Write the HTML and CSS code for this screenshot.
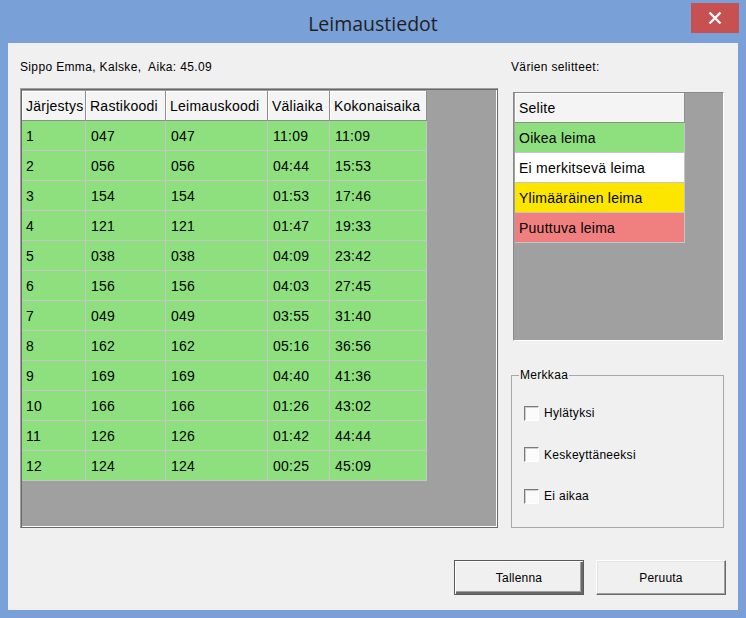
FILE: index.html
```html
<!DOCTYPE html>
<html lang="fi">
<head>
<meta charset="utf-8">
<title>Leimaustiedot</title>
<link rel="stylesheet" href="styles.css">
</head>
<body>
<div class="window">
  <div class="titlebar">
    <div class="title">Leimaustiedot</div>
    <div class="close"><svg width="14" height="14" viewBox="0 0 14 14"><path d="M1.5 1.5 L12.5 12.5 M12.5 1.5 L1.5 12.5" stroke="#fff" stroke-width="2.4" fill="none"/></svg></div>
  </div>
  <div class="client">
    <div class="main">
      <div class="leftcol">
        <div class="info">Sippo Emma, Kalske,&nbsp; Aika: 45.09</div>
        <div class="gridframe">
          <div class="grid">
            <div class="hc">Järjestys</div><div class="hc">Rastikoodi</div><div class="hc">Leimauskoodi</div><div class="hc">Väliaika</div><div class="hc">Kokonaisaika</div>
            <div class="dc">1</div><div class="dc">047</div><div class="dc">047</div><div class="dc">11:09</div><div class="dc">11:09</div>
            <div class="dc">2</div><div class="dc">056</div><div class="dc">056</div><div class="dc">04:44</div><div class="dc">15:53</div>
            <div class="dc">3</div><div class="dc">154</div><div class="dc">154</div><div class="dc">01:53</div><div class="dc">17:46</div>
            <div class="dc">4</div><div class="dc">121</div><div class="dc">121</div><div class="dc">01:47</div><div class="dc">19:33</div>
            <div class="dc">5</div><div class="dc">038</div><div class="dc">038</div><div class="dc">04:09</div><div class="dc">23:42</div>
            <div class="dc">6</div><div class="dc">156</div><div class="dc">156</div><div class="dc">04:03</div><div class="dc">27:45</div>
            <div class="dc">7</div><div class="dc">049</div><div class="dc">049</div><div class="dc">03:55</div><div class="dc">31:40</div>
            <div class="dc">8</div><div class="dc">162</div><div class="dc">162</div><div class="dc">05:16</div><div class="dc">36:56</div>
            <div class="dc">9</div><div class="dc">169</div><div class="dc">169</div><div class="dc">04:40</div><div class="dc">41:36</div>
            <div class="dc">10</div><div class="dc">166</div><div class="dc">166</div><div class="dc">01:26</div><div class="dc">43:02</div>
            <div class="dc">11</div><div class="dc">126</div><div class="dc">126</div><div class="dc">01:42</div><div class="dc">44:44</div>
            <div class="dc">12</div><div class="dc">124</div><div class="dc">124</div><div class="dc">00:25</div><div class="dc">45:09</div>
          </div>
        </div>
      </div>
      <div class="rightcol">
        <div class="info">Värien selitteet:</div>
        <div class="legendframe">
          <div class="legendgrid">
            <div class="hc">Selite</div>
            <div class="lc green">Oikea leima</div>
            <div class="lc white">Ei merkitsevä leima</div>
            <div class="lc yellow">Ylimääräinen leima</div>
            <div class="lc red">Puuttuva leima</div>
          </div>
        </div>
        <fieldset class="group">
          <legend>Merkkaa</legend>
          <div class="checks">
            <label class="check"><span class="box"></span>Hylätyksi</label>
            <label class="check"><span class="box"></span>Keskeyttäneeksi</label>
            <label class="check"><span class="box"></span>Ei aikaa</label>
          </div>
        </fieldset>
      </div>
    </div>
    <div class="buttons">
      <div class="btn default">Tallenna</div>
      <div class="btn">Peruuta</div>
    </div>
  </div>
</div>
</body>
</html>
```
FILE: styles.css
```css
* { box-sizing: border-box; }
html, body { margin: 0; padding: 0; }
body {
  width: 746px;
  height: 618px;
  background: #7aa0d8;
  font-family: "Liberation Sans", Arial, sans-serif;
  color: #000;
}
.window { width: 746px; height: 618px; }
.titlebar {
  position: relative;
  height: 43px;
}
.title {
  text-align: center;
  font-family: "Open Sans", "Noto Sans", sans-serif;
  font-size: 19.5px;
  line-height: 28px;
  padding-top: 10px;
  color: #1f1f1f;
}
.close {
  position: absolute;
  top: 3px;
  left: 691px;
  width: 48px;
  height: 30px;
  background: #c75050;
  display: flex;
  align-items: center;
  justify-content: center;
}
.client {
  margin: 0 8px;
  width: 730px;
  height: 567px;
  background: #f0f0f0;
  padding: 17px 0 0 12px;
}
.main {
  display: grid;
  grid-template-columns: 478px 213px;
  column-gap: 13px;
}
.info {
  font-size: 12px;
  line-height: 14px;
  height: 14px;
  letter-spacing: 0.35px;
  white-space: nowrap;
}
.gridframe {
  margin-top: 14px;
  width: 478px;
  height: 440px;
  background: #a0a0a0;
  border: 1px solid;
  border-color: #a0a0a0 #696969 #696969 #a0a0a0;
  box-shadow: inset 1px 1px #696969, inset -1px -1px #fff;
  padding: 2px 0 0 1px;
}
.grid {
  display: grid;
  grid-template-columns: 64px 80px 102px 62px 97px;
  grid-auto-rows: 30px;
  width: 405px;
  font-size: 14px;
  letter-spacing: 0.25px;
}
.hc {
  background: #f4f4f4;
  border-right: 1px solid #8e8e8e;
  border-bottom: 1px solid #8e8e8e;
  box-shadow: inset 1px 1px #fff;
  padding-left: 4px;
  line-height: 30px;
  white-space: nowrap;
}
.dc {
  background: #8ee07e;
  border-right: 1px solid #c6c6c6;
  border-bottom: 1px solid #c6c6c6;
  padding-left: 5px;
  line-height: 30px;
}
.dc:nth-child(5n+1) { padding-left: 4px; }
.rightcol { display: flex; flex-direction: column; }
.legendframe {
  margin-top: 18px;
  margin-left: 2px;
  width: 211px;
  height: 249px;
  background: #a0a0a0;
  border: 1px solid;
  border-color: #8a8a8a #fff #fff #8a8a8a;
  padding: 0 0 0 1px;
}
.legendgrid {
  display: grid;
  grid-template-columns: 170px;
  grid-auto-rows: 30px;
  font-size: 14px;
  letter-spacing: 0.25px;
}
.lc {
  border-right: 1px solid #c6c6c6;
  border-bottom: 1px solid #c6c6c6;
  padding-left: 4px;
  line-height: 30px;
  white-space: nowrap;
}
.green { background: #8ee07e; }
.white { background: #fff; }
.yellow { background: #fce600; }
.red { background: #f08080; }
.group {
  margin: 27px 0 0 0;
  width: 213px;
  height: 160px;
  border: 1px solid #a8a8a8;
  padding: 0 7px 0 7px;
  min-inline-size: 0;
}
.group legend {
  font-size: 12px;
  line-height: 14px;
  padding: 0 1px;
  letter-spacing: 0.3px;
}
.checks {
  display: flex;
  flex-direction: column;
  gap: 25.5px;
  padding: 23px 0 0 5px;
}
.check {
  display: flex;
  align-items: center;
  height: 16px;
  font-size: 12px;
  letter-spacing: 0.3px;
}
.box {
  width: 15px;
  height: 15px;
  margin-right: 5px;
  background: #fbfbfb;
  border: 1px solid;
  border-color: #7a7a7a #fff #fff #7a7a7a;
  box-shadow: inset 1px 1px #cfcfcf;
}
.buttons {
  display: flex;
  justify-content: flex-end;
  gap: 12px;
  margin-top: 32px;
  padding-right: 12px;
}
.btn {
  width: 130px;
  height: 35px;
  display: flex;
  align-items: center;
  justify-content: center;
  font-size: 12px;
  letter-spacing: 0.2px;
  background: #f0f0f0;
  border: 1px solid;
  border-color: #fff #696969 #696969 #fff;
  box-shadow: inset -1px -1px #a0a0a0, inset 1px 1px #e3e3e3;
}
.btn.default {
  border: 1px solid #5a5a5a;
  box-shadow: inset 1px 1px #fff, inset -2px -2px #696969, inset -3px -3px #a0a0a0;
}
```
